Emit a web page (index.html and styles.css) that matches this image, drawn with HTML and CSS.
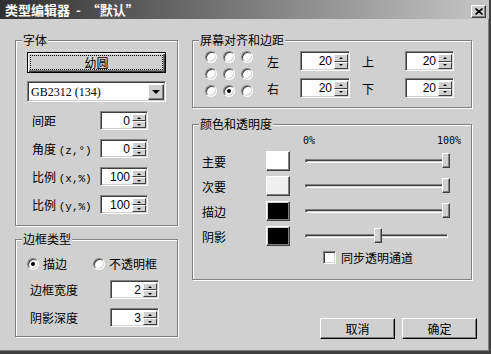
FILE: index.html
```html
<!DOCTYPE html>
<html lang="zh-CN">
<head>
<meta charset="UTF-8" />
<title>类型编辑器</title>
<link rel="stylesheet" href="styles.css">
</head>
<body>

<div class="window">
  <div class="titlebar">
    <span class="title">类型编辑器 - <span class="fw">“默认”</span></span>
    <div class="close">
      <svg width="8" height="7" viewBox="0 0 8 7"><path d="M0.5 0.5 L7.5 6.5 M7.5 0.5 L0.5 6.5" stroke="#000" stroke-width="1.6" fill="none"/></svg>
    </div>
  </div>

  <div class="body">
    <div class="col-left">

      <div class="group group-font">
        <span class="legend">字体</span>
        <div class="btn btn-default"><span class="focus">幼圆</span></div>
        <div class="combo">
          <span class="combo-text">GB2312 (134)</span>
          <span class="combo-btn"></span>
        </div>
        <div class="field-row">
          <span class="lbl lbl-font">间距</span>
          <div class="spin w48"><span class="spin-val">0</span><span class="spin-btns"><span class="spin-up"></span><span class="spin-dn"></span></span></div>
        </div>
        <div class="field-row">
          <span class="lbl lbl-font">角度 <span class="unit">(z,°)</span></span>
          <div class="spin w48"><span class="spin-val">0</span><span class="spin-btns"><span class="spin-up"></span><span class="spin-dn"></span></span></div>
        </div>
        <div class="field-row">
          <span class="lbl lbl-font">比例 <span class="unit">(x,%)</span></span>
          <div class="spin w48"><span class="spin-val">100</span><span class="spin-btns"><span class="spin-up"></span><span class="spin-dn"></span></span></div>
        </div>
        <div class="field-row">
          <span class="lbl lbl-font">比例 <span class="unit">(y,%)</span></span>
          <div class="spin w48"><span class="spin-val">100</span><span class="spin-btns"><span class="spin-up"></span><span class="spin-dn"></span></span></div>
        </div>
      </div>

      <div class="group group-border">
        <span class="legend">边框类型</span>
        <div class="radio-row">
          <label class="radio-item"><span class="radio on"></span>描边</label>
          <label class="radio-item"><span class="radio"></span>不透明框</label>
        </div>
        <div class="field-row tight">
          <span class="lbl lbl-border">边框宽度</span>
          <div class="spin w49"><span class="spin-val">2</span><span class="spin-btns"><span class="spin-up"></span><span class="spin-dn"></span></span></div>
        </div>
        <div class="field-row tight">
          <span class="lbl lbl-border">阴影深度</span>
          <div class="spin w49"><span class="spin-val">3</span><span class="spin-btns"><span class="spin-up"></span><span class="spin-dn"></span></span></div>
        </div>
      </div>

    </div>

    <div class="col-right">

      <div class="group group-align">
        <span class="legend">屏幕对齐和边距</span>
        <div class="radio-grid">
          <span class="radio"></span><span class="radio"></span><span class="radio"></span>
          <span class="radio"></span><span class="radio"></span><span class="radio"></span>
          <span class="radio"></span><span class="radio on"></span><span class="radio"></span>
        </div>
        <div class="margin-grid">
          <span>左</span>
          <div class="spin"><span class="spin-val">20</span><span class="spin-btns"><span class="spin-up"></span><span class="spin-dn"></span></span></div>
          <span></span>
          <span>上</span>
          <div class="spin"><span class="spin-val">20</span><span class="spin-btns"><span class="spin-up"></span><span class="spin-dn"></span></span></div>
          <span>右</span>
          <div class="spin"><span class="spin-val">20</span><span class="spin-btns"><span class="spin-up"></span><span class="spin-dn"></span></span></div>
          <span></span>
          <span>下</span>
          <div class="spin"><span class="spin-val">20</span><span class="spin-btns"><span class="spin-up"></span><span class="spin-dn"></span></span></div>
        </div>
      </div>

      <div class="group group-color">
        <span class="legend">颜色和透明度</span>
        <div class="scale-head"><span>0%</span><span>100%</span></div>
        <div class="color-row">
          <span class="lbl-color">主要</span>
          <span class="swatch swatch-white"></span>
          <div class="slider"><span class="track"></span><span class="thumb" style="--v: 1"></span></div>
        </div>
        <div class="color-row">
          <span class="lbl-color">次要</span>
          <span class="swatch swatch-light"></span>
          <div class="slider"><span class="track"></span><span class="thumb" style="--v: 1"></span></div>
        </div>
        <div class="color-row">
          <span class="lbl-color">描边</span>
          <span class="swatch swatch-black"></span>
          <div class="slider"><span class="track"></span><span class="thumb" style="--v: 1"></span></div>
        </div>
        <div class="color-row">
          <span class="lbl-color">阴影</span>
          <span class="swatch swatch-black"></span>
          <div class="slider"><span class="track"></span><span class="thumb" style="--v: 0.5"></span></div>
        </div>
        <label class="sync-row"><span class="checkbox"></span>同步透明通道</label>
      </div>

      <div class="actions">
        <div class="btn">取消</div>
        <div class="btn">确定</div>
      </div>

    </div>
  </div>
</div>

</body>
</html>
```

FILE: styles.css
```css
* { box-sizing: border-box; }

html, body {
  margin: 0; padding: 0;
}

body {
  width: 491px; height: 354px;
  overflow: hidden;
  background: #d0d0d0;
  font-family: "Noto Sans CJK SC", sans-serif;
  font-size: 12px;
  color: #000;
}

.window {
  width: 491px; height: 354px;
  background: #d0d0d0;
  border-right: 2px solid #404040;
  border-bottom: 3px solid #404040;
  box-shadow: inset -1px -1px #808080;
}

/* title bar */
.titlebar {
  height: 19px;
  display: flex;
  justify-content: space-between;
  background: linear-gradient(to right, #303030, #c6c6c6);
}

.title {
  color: #fff;
  font-weight: bold;
  font-size: 13px;
  line-height: 19px;
  padding-left: 5px;
  white-space: pre;
  word-spacing: 3px;
}

.title .fw {
  font-feature-settings: "fwid";
  word-spacing: 0;
}

.close {
  width: 15px; height: 13px;
  margin: 5px 3px 0 0;
  background: #d0d0d0;
  border: 1px solid;
  border-color: #fff #404040 #404040 #fff;
  box-shadow: inset -1px -1px #808080;
  display: flex;
  align-items: center;
  justify-content: center;
}

/* main layout */
.body {
  display: flex;
  padding: 21px 0 0 15px;
}

.col-left {
  width: 163px;
  display: flex;
  flex-direction: column;
  gap: 13px;
}

.col-right {
  width: 280px;
  margin-left: 14px;
}

/* etched group frame */
.group {
  position: relative;
  border: 1px solid #808080;
  box-shadow: inset 1px 1px #fff, 1px 1px #fff;
}

.legend {
  position: absolute;
  top: -8px; left: 6px;
  padding: 0 1px;
  line-height: 14px;
  background: #d0d0d0;
}

/* buttons */
.btn {
  width: 75px; height: 21px;
  background: #d0d0d0;
  border: 1px solid;
  border-color: #fff #000 #000 #fff;
  box-shadow: inset -1px -1px #808080;
  display: flex;
  align-items: center;
  justify-content: center;
  line-height: 14px;
}

.btn-default {
  width: 139px;
  border-color: #000;
  box-shadow: inset 1px 1px #fff, inset -1px -1px #404040, inset -2px -2px #808080;
  padding: 2px;
  margin-bottom: 8px;
}

.btn-default .focus {
  width: 100%; height: 100%;
  border: 1px dotted #000;
  display: flex;
  align-items: center;
  justify-content: center;
}

/* sunken controls */
.combo, .spin {
  display: flex;
  background: #fff;
  border: 1px solid;
  border-color: #808080 #fff #fff #808080;
  box-shadow: inset 1px 1px #404040, inset -1px -1px #d0d0d0;
  padding: 2px 1px 1px 2px;
}

.combo {
  width: 139px; height: 21px;
  margin-bottom: 9px;
}

.combo-text {
  flex: 1;
  padding-left: 1px;
  font: 12px "Liberation Serif", serif;
  line-height: 16px;
}

.combo-btn {
  width: 16px;
  background: #d0d0d0;
  border: 1px solid;
  border-color: #fff #404040 #404040 #fff;
  box-shadow: inset -1px -1px #808080;
  display: flex;
  align-items: center;
  justify-content: center;
}

.combo-btn::after {
  content: "";
  border-left: 4px solid transparent;
  border-right: 4px solid transparent;
  border-top: 4px solid #000;
}

.spin { height: 20px; }
.spin.w48 { width: 48px; height: 19px; }
.spin.w49 { width: 49px; height: 19px; }

.spin-val {
  flex: 1;
  text-align: right;
  padding-right: 2px;
  font: 12px "Liberation Sans", sans-serif;
  line-height: 15px;
}

.spin-btns {
  width: 14px;
  display: flex;
  flex-direction: column;
}

.spin-btns span {
  flex: 1;
  background: #d0d0d0;
  border: 1px solid;
  border-color: #fff #404040 #404040 #fff;
  display: flex;
  align-items: center;
  justify-content: center;
}

.spin-up::after, .spin-dn::after {
  content: "";
  border-left: 2px solid transparent;
  border-right: 2px solid transparent;
}
.spin-up::after { border-bottom: 2px solid #000; }
.spin-dn::after { border-top: 2px solid #000; }

/* font group */
.group-font {
  height: 186px;
  padding: 11px 0 0 11px;
}

.field-row {
  display: flex;
  align-items: center;
  height: 19px;
  padding-left: 5px;
  margin-bottom: 9px;
}

.field-row.tight { padding-left: 3px; }

.lbl-font { width: 68px; }
.lbl-border { width: 80px; }

.unit {
  font: 11px "Liberation Mono", monospace;
}

/* border group */
.group-border {
  height: 98px;
  padding: 18px 0 0 11px;
}

.radio-row {
  display: flex;
  height: 12px;
  margin-bottom: 10px;
}

.radio-item {
  width: 66px;
  display: flex;
  align-items: center;
  gap: 4px;
  line-height: 12px;
}

.radio {
  position: relative;
  width: 12px; height: 12px;
  flex: none;
  border-radius: 50%;
  background: #fff;
  border: 1px solid;
  border-color: #808080 #fff #fff #808080;
  box-shadow: inset 1px 1px #404040, inset -1px -1px #d0d0d0;
}

.radio.on::after {
  content: "";
  position: absolute;
  left: 3px; top: 3px;
  width: 4px; height: 4px;
  border-radius: 50%;
  background: #000;
}

/* align group */
.group-align {
  height: 68px;
  padding: 10px 0 0 12px;
  display: flex;
}

.radio-grid {
  display: grid;
  grid-template-columns: repeat(3, 12px);
  grid-auto-rows: 12px;
  gap: 5px 6px;
}

.margin-grid {
  margin-left: 14px;
  display: grid;
  grid-template-columns: 33px 50px 12px 43px 49px;
  grid-auto-rows: 20px;
  row-gap: 7px;
  align-items: center;
}

/* colour group */
.group-color {
  height: 156px;
  margin-top: 16px;
  padding: 9px 0 0 9px;
}

.scale-head {
  display: flex;
  justify-content: space-between;
  width: 158px;
  height: 14px;
  margin: 0 0 3px 101px;
  font: 10px "DejaVu Sans Mono", monospace;
  line-height: 14px;
}

.color-row {
  display: flex;
  align-items: center;
  height: 20px;
  margin-bottom: 5px;
}

.lbl-color { width: 64px; }

.swatch {
  width: 24px; height: 20px;
  border: 1px solid;
  border-color: #fff #404040 #404040 #fff;
  box-shadow: inset -1px -1px #808080;
}
.swatch-white { background: #fff; }
.swatch-light { background: #f0f0f0; }
.swatch-black {
  background: #000;
  box-shadow: inset -1px -1px #808080, inset 1px 1px #d0d0d0;
}

.slider {
  position: relative;
  width: 145px; height: 20px;
  margin-left: 15px;
  display: flex;
  align-items: center;
}

.track {
  width: 143px; height: 4px;
  border: 1px solid;
  border-color: #808080 #fff #fff #808080;
  box-shadow: inset 1px 1px #404040;
}

.thumb {
  position: absolute;
  top: 2px;
  left: calc(var(--v) * 137px);
  width: 8px; height: 15px;
  background: #d0d0d0;
  border: 1px solid;
  border-color: #fff #404040 #404040 #fff;
  box-shadow: inset -1px -1px #808080;
}

.sync-row {
  display: flex;
  align-items: center;
  gap: 5px;
  height: 13px;
  margin: 4px 0 0 121px;
}

.checkbox {
  width: 13px; height: 13px;
  background: #fff;
  border: 1px solid;
  border-color: #808080 #fff #fff #808080;
  box-shadow: inset 1px 1px #404040, inset -1px -1px #d0d0d0;
}

/* dialog buttons */
.actions {
  display: flex;
  justify-content: flex-end;
  gap: 7px;
  margin: 38px -5px 0 0;
}
```
